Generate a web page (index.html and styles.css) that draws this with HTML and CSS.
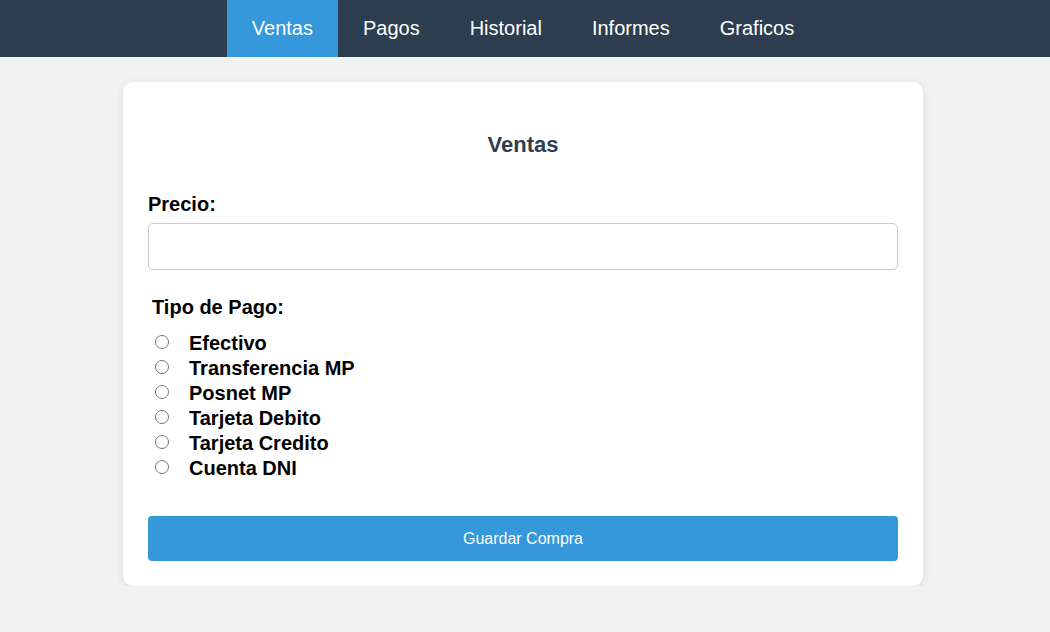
FILE: index.html
```html
<!DOCTYPE html>
<html lang="es">
<head>
<meta charset="utf-8">
<title>Ventas</title>
<link rel="stylesheet" href="styles.css">
</head>
<body>
<nav class="topnav">
  <a class="nav-link active" href="#">Ventas</a>
  <a class="nav-link" href="#">Pagos</a>
  <a class="nav-link" href="#">Historial</a>
  <a class="nav-link" href="#">Informes</a>
  <a class="nav-link" href="#">Graficos</a>
</nav>
<div class="page">
  <main class="card">
    <h2 class="card-title">Ventas</h2>
    <form class="form">
      <label class="field-label" for="precio">Precio:</label>
      <input class="text-input" id="precio" type="text">
      <div class="pay-group">
        <div class="group-label">Tipo de Pago:</div>
        <div class="radio-list">
          <label class="radio-option"><input type="radio" name="pago"><span>Efectivo</span></label>
          <label class="radio-option"><input type="radio" name="pago"><span>Transferencia MP</span></label>
          <label class="radio-option"><input type="radio" name="pago"><span>Posnet MP</span></label>
          <label class="radio-option"><input type="radio" name="pago"><span>Tarjeta Debito</span></label>
          <label class="radio-option"><input type="radio" name="pago"><span>Tarjeta Credito</span></label>
          <label class="radio-option"><input type="radio" name="pago"><span>Cuenta DNI</span></label>
        </div>
      </div>
      <button class="save-btn" type="button">Guardar Compra</button>
    </form>
  </main>
</div>
</body>
</html>
```

FILE: styles.css
```css
* { box-sizing: border-box; }
html, body {
  margin: 0;
  padding: 0;
  background: #f2f2f2;
  font-family: "Liberation Sans", Arial, sans-serif;
}
.topnav {
  background: #2c3e50;
  height: 57px;
  display: flex;
  justify-content: center;
  padding-right: 4px;
}
.nav-link {
  color: #fff;
  text-decoration: none;
  font-size: 20px;
  line-height: 57px;
  padding: 0 25px;
}
.nav-link.active { background: #3498db; }
.page {
  padding-right: 4px;
}
.card {
  width: 800px;
  margin: 25px auto 0;
  background: #fff;
  border-radius: 10px;
  box-shadow: 0 2px 8px rgba(0,0,0,0.1);
  padding: 25px;
}
.card-title {
  margin: 25px 0 0;
  text-align: center;
  font-size: 22px;
  line-height: 26px;
  color: #2c3e50;
  font-weight: bold;
}
.form {
  display: flex;
  flex-direction: column;
}
.field-label {
  margin-top: 35px;
  font-size: 20px;
  line-height: 23px;
  font-weight: bold;
  color: #000;
}
.text-input {
  margin-top: 7px;
  height: 47px;
  width: 100%;
  border: 1px solid #ccc;
  border-radius: 5px;
  font-size: 16px;
  padding: 0 10px;
}
.pay-group {
  margin-top: 26px;
  padding-left: 4px;
}
.group-label {
  font-size: 20px;
  line-height: 23px;
  font-weight: bold;
  color: #000;
}
.radio-list {
  margin-top: 12px;
  display: flex;
  flex-direction: column;
}
.radio-option {
  display: flex;
  align-items: center;
  height: 25px;
  font-size: 20px;
  font-weight: bold;
  color: #000;
}
.radio-option input {
  margin: 0 20px 3px 3px;
  width: 14px;
  height: 14px;
}
.save-btn {
  margin-top: 35px;
  height: 45px;
  width: 100%;
  border: none;
  border-radius: 4px;
  background: #3498db;
  color: #fff;
  font-family: "Liberation Sans", Arial, sans-serif;
  font-size: 16px;
}
```
